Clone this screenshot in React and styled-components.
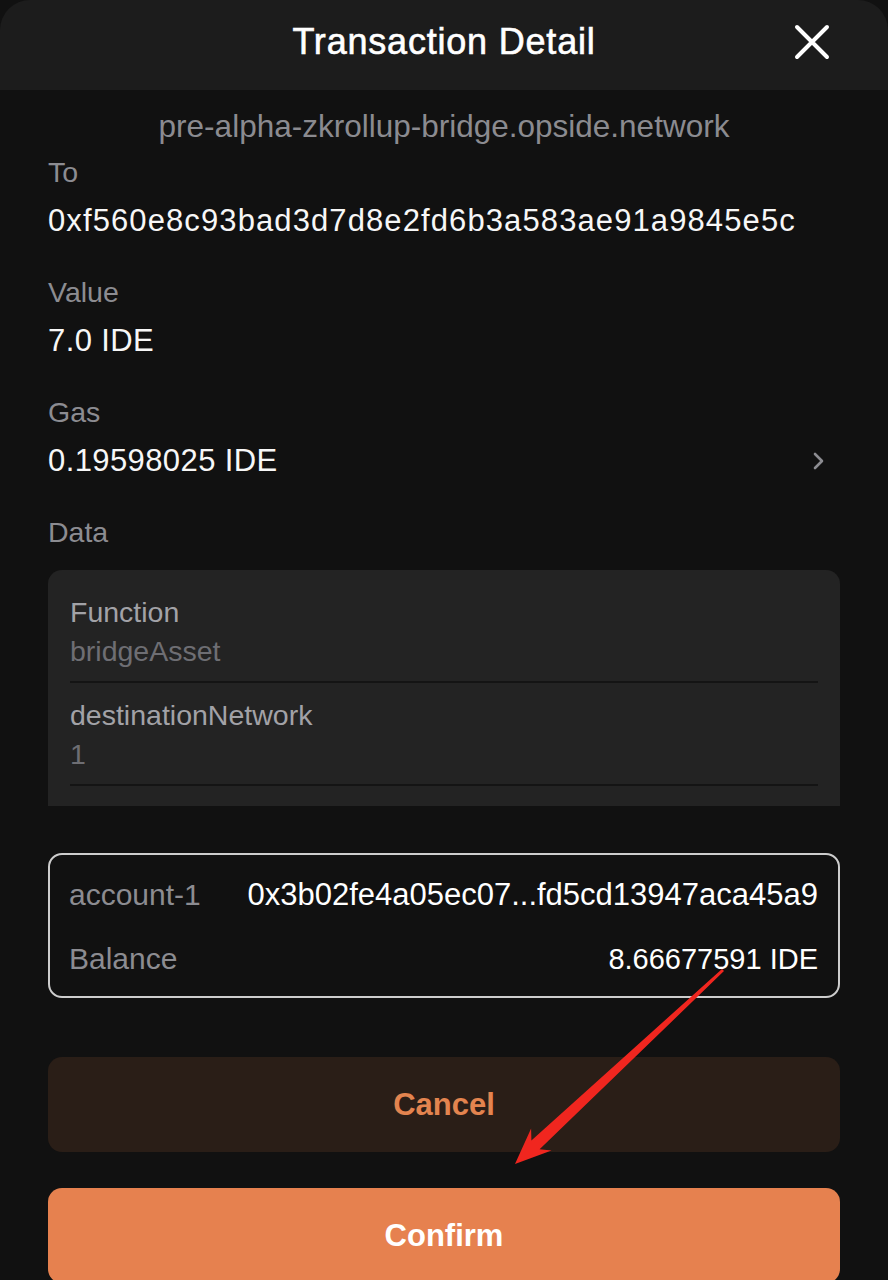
import React from "react";
import styled, { createGlobalStyle } from "styled-components";

const GlobalStyle = createGlobalStyle`
  html, body { margin: 0; padding: 0; background: #000; }
  body { font-family: "Liberation Sans", Arial, sans-serif; -webkit-font-smoothing: antialiased; }
  * { box-sizing: border-box; }
`;

const Page = styled.div`
  position: relative;
  width: 888px;
  height: 1280px;
  overflow: hidden;
  background: #111111;
`;

const Header = styled.header`
  height: 90px;
  padding-bottom: 6px;
  background: #1c1c1c;
  border-radius: 30px 30px 0 0;
  display: grid;
  grid-template-columns: 1fr auto 1fr;
  align-items: center;
`;

const Title = styled.h1`
  grid-column: 2;
  margin: 0;
  font-size: 36px;
  font-weight: 400;
  letter-spacing: 0.8px;
  -webkit-text-stroke: 0.6px #ffffff;
  color: #ffffff;
  line-height: 44px;
`;

const CloseButton = styled.button`
  grid-column: 3;
  justify-self: end;
  margin-right: 58px;
  width: 36px;
  height: 36px;
  padding: 0;
  border: 0;
  background: transparent;
  display: flex;
  align-items: center;
  justify-content: center;
`;

const Content = styled.main`
  padding: 0 48px;
  display: flex;
  flex-direction: column;
`;

const Origin = styled.div`
  margin: 16px 0 6px;
  text-align: center;
  font-size: 31.5px;
  line-height: 40px;
  color: #8b8b90;
`;

const Fields = styled.div`
  display: flex;
  flex-direction: column;
  gap: 31px;
`;

const Field = styled.section`
  display: flex;
  flex-direction: column;
`;

const Label = styled.div`
  font-size: 28.5px;
  line-height: 40px;
  color: #8c8c91;
`;

const ValueRow = styled.div`
  margin-top: 9px;
  display: flex;
  align-items: center;
  justify-content: space-between;
`;

const Value = styled.div`
  font-size: 31px;
  line-height: 40px;
  color: #f7f7f7;
  letter-spacing: ${(p) => (p.$wide ? "1.1px" : "0.4px")};
  white-space: nowrap;
`;

const Chevron = styled.svg`
  width: 14px;
  height: 20px;
  margin-right: 14px;
`;

const DataBox = styled.div`
  margin-top: 18px;
  background: #232323;
  border-radius: 14px 14px 0 0;
  padding: 10px 22px 20px;
`;

const DataItem = styled.div`
  padding: 14px 0 12px;
  border-bottom: 2px solid #141414;
`;

const DataKey = styled.div`
  font-size: 28.5px;
  line-height: 36px;
  color: #a2a2a7;
`;

const DataVal = styled.div`
  margin-top: 3px;
  font-size: 28.5px;
  line-height: 36px;
  color: #6e6e73;
`;

const AccountCard = styled.div`
  margin-top: 47px;
  border: 2px solid #cdcdcd;
  border-radius: 14px;
  padding: 20px 20px 17px 19px;
  display: flex;
  flex-direction: column;
  gap: 24px;
`;

const AccountRow = styled.div`
  display: flex;
  align-items: center;
  justify-content: space-between;
  line-height: 40px;
`;

const AccountLabel = styled.span`
  font-size: 30px;
  color: #8c8c91;
`;

const AccountValue = styled.span`
  font-size: ${(p) => p.$size || 30}px;
  color: #ffffff;
  white-space: nowrap;
`;

const Buttons = styled.div`
  margin-top: 59px;
  display: flex;
  flex-direction: column;
  gap: 36px;
`;

const ActionButton = styled.button`
  height: 95px;
  border: 0;
  border-radius: 14px;
  font-family: "Liberation Sans", Arial, sans-serif;
  font-size: 31px;
  font-weight: 700;
  background: ${(p) => (p.$primary ? "#e6814f" : "#2a1e17")};
  color: ${(p) => (p.$primary ? "#ffffff" : "#e3844f")};
`;

const Overlay = styled.svg`
  position: absolute;
  inset: 0;
  pointer-events: none;
`;

export default function App() {
  return (
    <>
      <GlobalStyle />
      <Page>
        <Header>
          <Title>Transaction Detail</Title>
          <CloseButton aria-label="Close">
            <svg width="36" height="36" viewBox="0 0 36 36">
              <path d="M3 3 L33 33 M33 3 L3 33" stroke="#ffffff" strokeWidth="4" strokeLinecap="round" fill="none" />
            </svg>
          </CloseButton>
        </Header>
        <Content>
          <Origin>pre-alpha-zkrollup-bridge.opside.network</Origin>
          <Fields>
            <Field>
              <Label>To</Label>
              <ValueRow>
                <Value $wide>0xf560e8c93bad3d7d8e2fd6b3a583ae91a9845e5c</Value>
              </ValueRow>
            </Field>
            <Field>
              <Label>Value</Label>
              <ValueRow>
                <Value>7.0 IDE</Value>
              </ValueRow>
            </Field>
            <Field>
              <Label>Gas</Label>
              <ValueRow>
                <Value>0.19598025 IDE</Value>
                <Chevron viewBox="0 0 14 20">
                  <path d="M3 3 L10 10 L3 17" stroke="#8c8c91" strokeWidth="2.6" fill="none" strokeLinecap="round" strokeLinejoin="round" />
                </Chevron>
              </ValueRow>
            </Field>
            <Field>
              <Label>Data</Label>
              <DataBox>
                <DataItem>
                  <DataKey>Function</DataKey>
                  <DataVal>bridgeAsset</DataVal>
                </DataItem>
                <DataItem>
                  <DataKey>destinationNetwork</DataKey>
                  <DataVal>1</DataVal>
                </DataItem>
              </DataBox>
            </Field>
          </Fields>
          <AccountCard>
            <AccountRow>
              <AccountLabel>account-1</AccountLabel>
              <AccountValue $size={31}>0x3b02fe4a05ec07...fd5cd13947aca45a9</AccountValue>
            </AccountRow>
            <AccountRow>
              <AccountLabel>Balance</AccountLabel>
              <AccountValue $size={29}>8.66677591 IDE</AccountValue>
            </AccountRow>
          </AccountCard>
          <Buttons>
            <ActionButton>Cancel</ActionButton>
            <ActionButton $primary>Confirm</ActionButton>
          </Buttons>
        </Content>
        <Overlay width="888" height="1280" viewBox="0 0 888 1280">
          <polygon
            points="724,971.1 539.6,1149.3 551.5,1150.4 515,1164 531.1,1128.4 531.4,1140.5 722,968.9"
            fill="#f0261f"
          />
        </Overlay>
      </Page>
    </>
  );
}
